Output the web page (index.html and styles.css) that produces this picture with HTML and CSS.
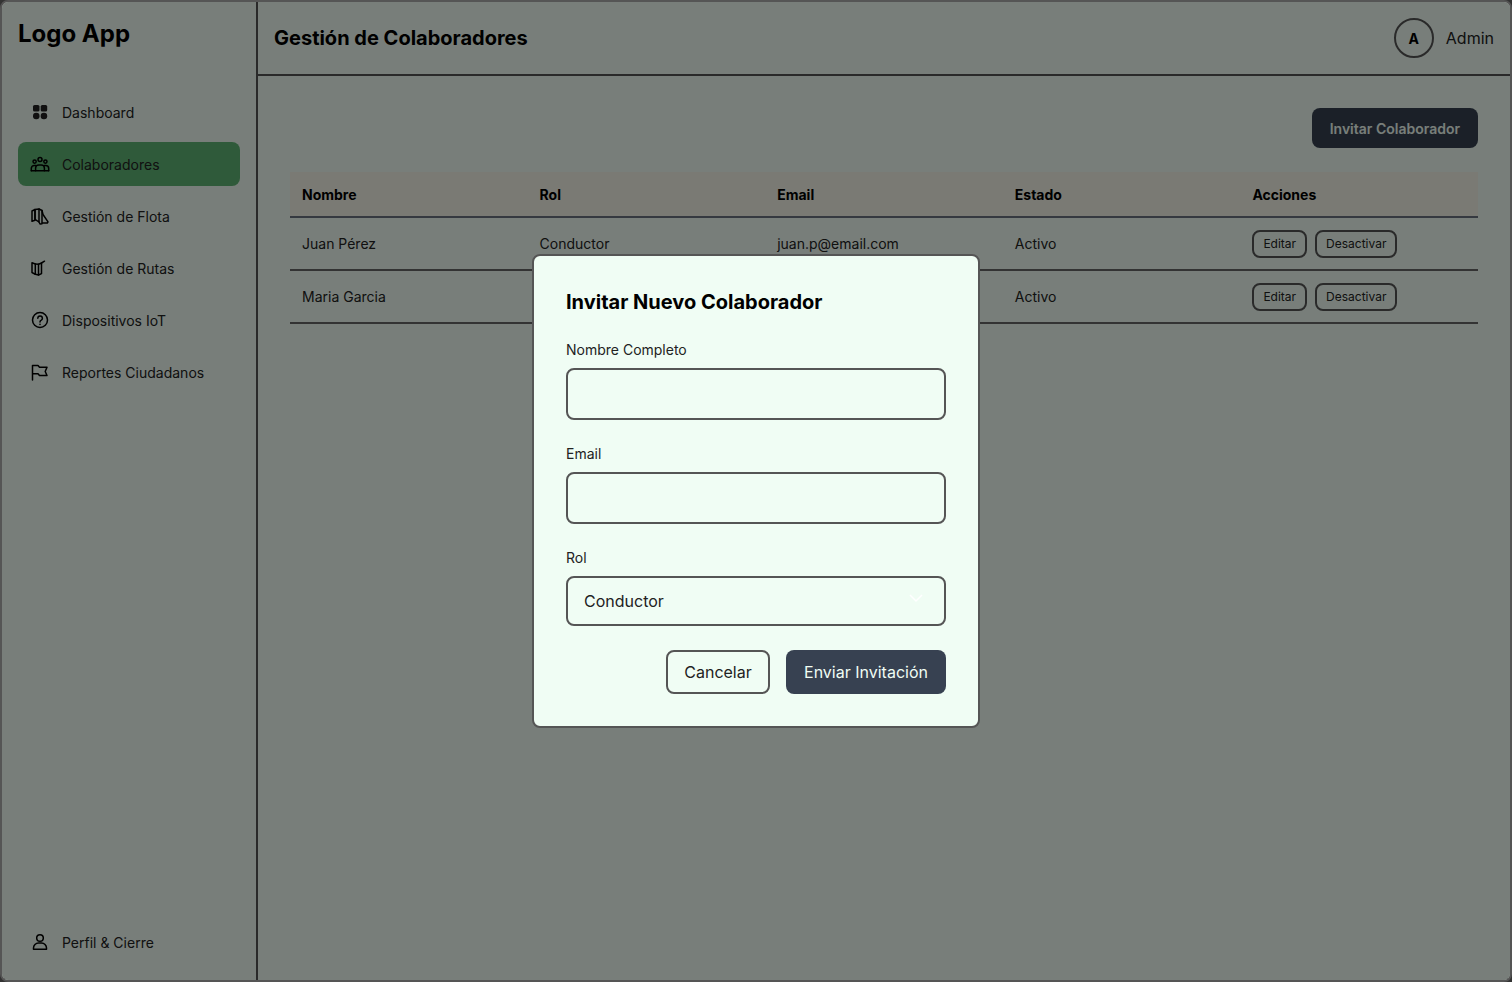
FILE: index.html
```html
<!DOCTYPE html>
<html lang="es">
<head>
    <meta charset="UTF-8">
    <meta name="viewport" content="width=device-width, initial-scale=1.0">
    <title>Gestión de Colaboradores</title>
    <link rel="stylesheet" href="styles.css">
</head>
<body>
    <div class="app">
        <aside class="sidebar">
            <div class="logo">Logo App</div>
            <nav class="nav">
                <a class="nav-item" href="#">
                    <svg class="nav-icon" viewBox="0 0 20 20"><rect x="3" y="3" width="6.5" height="6.5" rx="1.6" fill="currentColor"/><rect x="10.7" y="3" width="6.5" height="6.5" rx="1.6" fill="currentColor"/><rect x="3" y="10.7" width="6.5" height="6.5" rx="3" fill="currentColor"/><rect x="10.7" y="10.7" width="6.5" height="6.5" rx="3" fill="currentColor"/></svg>
                    Dashboard
                </a>
                <a class="nav-item active" href="#">
                    <svg class="nav-icon" viewBox="0 0 20 20"><circle cx="10" cy="5.4" r="2"/><circle cx="4.6" cy="7.6" r="1.6"/><circle cx="15.4" cy="7.6" r="1.6"/><path d="M5.6 16.7v-2.6a3.2 3.2 0 0 1 3.2-3.2h2.4a3.2 3.2 0 0 1 3.2 3.2v2.6"/><path d="M1.3 16.7v-2.3a3 3 0 0 1 3-3h1.5M18.7 16.7v-2.3a3 3 0 0 0-3-3h-1.5"/><path d="M1.3 16.7h17.4"/></svg>
                    Colaboradores
                </a>
                <a class="nav-item" href="#">
                    <svg class="nav-icon" viewBox="0 0 20 20"><path d="M2 5l3-1.5v10.800l-3 1z"/><path d="M5 3.500l4-.5v13l-4-2.700z"/><path d="M9 3l3 1.500 1 4 5 7.300-.7 1.200h-4.800"/><path d="M12 4.500v13.300l-2 .2-1-2"/></svg>
                    Gestión de Flota
                </a>
                <a class="nav-item" href="#">
                    <svg class="nav-icon" viewBox="0 0 20 20"><path d="M2 4.800l3.300 1.200v10.300l-3.300-1.800z"/><path d="M5.300 6l3.200.2v10.800l-3.200-.7"/><path d="M8.500 6.200l3-1.200v10.600l-3 1.400"/><path d="M11.500 5l3-1.800"/></svg>
                    Gestión de Rutas
                </a>
                <a class="nav-item" href="#">
                    <svg class="nav-icon" viewBox="0 0 20 20"><circle cx="10" cy="10" r="7.500"/><path d="M7.800 8.200a2.300 2.300 0 1 1 3.500 2c-.9.500-1.300 1-1.300 1.800"/><path d="M10 14.200v.3"/></svg>
                    Dispositivos IoT
                </a>
                <a class="nav-item" href="#">
                    <svg class="nav-icon" viewBox="0 0 20 20"><path d="M2.500 18V3.500h5.500l1.500 1.800h7.500l-1.800 4.200 1.800 4h-7.500l-1.500-1.800H2.500"/></svg>
                    Reportes Ciudadanos
                </a>
            </nav>
            <a class="nav-item" href="#">
                <svg class="nav-icon" viewBox="0 0 20 20"><circle cx="10" cy="6" r="3.300"/><path d="M3.500 17.300v-1.300a5 5 0 0 1 5-5h3a5 5 0 0 1 5 5v1.300z"/></svg>
                Perfil &amp; Cierre
            </a>
        </aside>

        <div class="content">
            <header class="topbar">
                <h1>Gestión de Colaboradores</h1>
                <div class="user">
                    <span class="avatar">A</span>
                    <span>Admin</span>
                </div>
            </header>
            <main class="main">
                <div class="toolbar">
                    <button class="btn-invite">Invitar Colaborador</button>
                </div>
                <table>
                    <thead>
                        <tr>
                            <th>Nombre</th>
                            <th>Rol</th>
                            <th>Email</th>
                            <th>Estado</th>
                            <th>Acciones</th>
                        </tr>
                    </thead>
                    <tbody>
                        <tr>
                            <td>Juan Pérez</td>
                            <td>Conductor</td>
                            <td>juan.p@email.com</td>
                            <td>Activo</td>
                            <td><div class="actions"><button class="btn-small">Editar</button><button class="btn-small">Desactivar</button></div></td>
                        </tr>
                        <tr>
                            <td>Maria Garcia</td>
                            <td>Supervisor</td>
                            <td>maria.g@email.com</td>
                            <td>Activo</td>
                            <td><div class="actions"><button class="btn-small">Editar</button><button class="btn-small">Desactivar</button></div></td>
                        </tr>
                    </tbody>
                </table>
            </main>
        </div>

        <!-- Modal de invitación -->
        <div class="overlay">
            <form class="modal">
                <h2>Invitar Nuevo Colaborador</h2>
                <label for="nombre">Nombre Completo</label>
                <input type="text" id="nombre">
                <label for="email">Email</label>
                <input type="email" id="email">
                <label for="rol">Rol</label>
                <div class="select-wrap">
                    <select id="rol">
                        <option>Conductor</option>
                        <option>Supervisor</option>
                    </select>
                    <svg class="chevron" viewBox="0 0 20 20"><path d="M4 7l6 6 6-6"/></svg>
                </div>
                <div class="modal-actions">
                    <button type="button" class="btn-cancel">Cancelar</button>
                    <button type="submit" class="btn-send">Enviar Invitación</button>
                </div>
            </form>
        </div>
    </div>
</body>
</html>
```
FILE: styles.css
```css
* {
    box-sizing: border-box;
}

html, body {
    height: 100%;
}

body {
    margin: 0;
    font-family: Inter, "Liberation Sans", sans-serif;
    color: #000;
    background: #333;
}

.app {
    position: relative;
    display: flex;
    height: 982px;
    background: #f0fdf4;
    border: 2px solid #555;
    border-radius: 8px;
    overflow: hidden;
}

.sidebar {
    display: flex;
    flex-direction: column;
    width: 256px;
    flex-shrink: 0;
    padding: 16px;
    border-right: 2px solid #555;
}

.logo {
    font-size: 24px;
    font-weight: 700;
    line-height: 32px;
    margin-bottom: 40px;
}

.nav {
    display: flex;
    flex-direction: column;
    gap: 8px;
    flex: 1;
}

.nav-item {
    display: flex;
    align-items: center;
    gap: 12px;
    height: 44px;
    padding: 0 12px;
    border-radius: 8px;
    font-size: 14px;
    color: #222;
    text-decoration: none;
}

.nav-item.active {
    background: #5fb574;
}

.nav-icon {
    width: 20px;
    height: 20px;
    flex-shrink: 0;
    fill: none;
    stroke: #000;
    stroke-width: 1.5;
    stroke-linecap: round;
    stroke-linejoin: round;
}

.nav-icon rect {
    stroke: none;
}

.content {
    flex: 1;
    display: flex;
    flex-direction: column;
    min-width: 0;
}

.topbar {
    display: flex;
    align-items: center;
    justify-content: space-between;
    height: 74px;
    padding: 0 16px;
    border-bottom: 2px solid #555;
}

.topbar h1 {
    margin: 0;
    font-size: 20px;
    font-weight: 700;
}

.user {
    display: flex;
    align-items: center;
    gap: 12px;
    font-size: 16px;
    color: #222;
}

.avatar {
    display: flex;
    align-items: center;
    justify-content: center;
    width: 40px;
    height: 40px;
    border: 2px solid #555;
    border-radius: 50%;
    font-size: 14px;
    font-weight: 700;
    color: #000;
}

.main {
    padding: 32px;
}

.toolbar {
    display: flex;
    justify-content: flex-end;
    margin-bottom: 24px;
}

.btn-invite {
    height: 40px;
    padding: 0 18px;
    border: none;
    border-radius: 8px;
    background: #374151;
    color: #f0fdf4;
    font-family: inherit;
    font-size: 14px;
    font-weight: 600;
}

table {
    width: 100%;
    border-collapse: collapse;
    table-layout: fixed;
    font-size: 14px;
}

th {
    height: 45px;
    padding: 0 12px;
    text-align: left;
    font-weight: 700;
    background: #f5f5e9;
    border-bottom: 2px solid #6b7280;
}

td {
    height: 53px;
    padding: 0 12px;
    color: #222;
    border-bottom: 2px solid #666;
}

.actions {
    display: flex;
    gap: 8px;
}

.btn-small {
    height: 28px;
    padding: 0 9px;
    border: 2px solid #555;
    border-radius: 8px;
    background: transparent;
    color: #222;
    font-family: inherit;
    font-size: 12px;
}

.overlay {
    position: absolute;
    top: -2px;
    left: -2px;
    width: 1512px;
    height: 982px;
    display: flex;
    align-items: center;
    justify-content: center;
    background: rgba(0, 0, 0, 0.5);
}

.modal {
    display: flex;
    flex-direction: column;
    width: 448px;
    padding: 32px;
    background: #f0fdf4;
    border: 2px solid #555;
    border-radius: 8px;
}

.modal h2 {
    margin: 0 0 24px;
    font-size: 20px;
    font-weight: 700;
    line-height: 28px;
}

.modal label {
    font-size: 14px;
    line-height: 20px;
    margin-bottom: 8px;
    color: #222;
}

.modal input {
    height: 52px;
    margin-bottom: 24px;
    border: 2px solid #555;
    border-radius: 8px;
    background: transparent;
}

.select-wrap {
    position: relative;
}

.select-wrap select {
    display: block;
    width: 100%;
    height: 50px;
    padding: 0 16px;
    border: 2px solid #555;
    border-radius: 8px;
    background: transparent;
    color: #222;
    font-family: inherit;
    font-size: 16px;
    appearance: none;
}

.chevron {
    position: absolute;
    top: 12px;
    right: 20px;
    width: 20px;
    height: 20px;
    fill: none;
    stroke: #fff;
    stroke-width: 1.5;
}

.modal-actions {
    display: flex;
    justify-content: flex-end;
    gap: 16px;
    margin-top: 24px;
}

.modal-actions button {
    height: 44px;
    border-radius: 8px;
    font-family: inherit;
    font-size: 16px;
}

.btn-cancel {
    width: 104px;
    border: 2px solid #555;
    background: transparent;
    color: #222;
}

.btn-send {
    width: 160px;
    border: none;
    background: #374151;
    color: #f0fdf4;
}
```
